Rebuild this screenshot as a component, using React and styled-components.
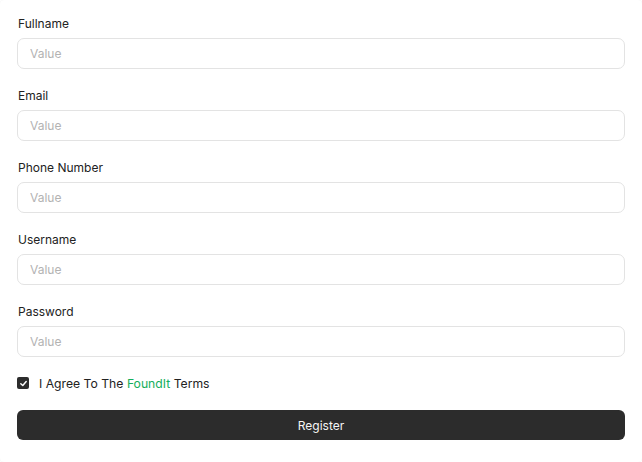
import React from "react";
import styled, { createGlobalStyle } from "styled-components";

const Global = createGlobalStyle`
  html, body { margin: 0; padding: 0; background: #ffffff; }
  body { font-family: Inter, "Noto Sans", sans-serif; }
  * { box-sizing: border-box; }
`;

const Card = styled.form`
  width: 642px;
  min-height: 462px;
  padding: 15px 17px 0 17px;
  display: flex;
  flex-direction: column;
  background: #fff;
  border-radius: 4px;
  box-shadow: 0 0 1px rgba(0,0,0,0.08);
`;

const Field = styled.div`
  display: flex;
  flex-direction: column;
  margin-bottom: 18px;
`;

const Label = styled.label`
  font-size: 12px;
  line-height: 16px;
  color: #222;
  padding: 1px 0 0 1px;
  margin-bottom: 6px;
`;

const Input = styled.input`
  height: 31px;
  width: 608px;
  border: 1px solid #e3e3e3;
  border-radius: 7px;
  padding: 0 12px;
  font-family: Inter, "Noto Sans", sans-serif;
  font-size: 12px;
  color: #1e1e1e;
  outline: none;
  &::placeholder { color: #b3b3b3; }
`;

const CheckRow = styled.label`
  display: flex;
  align-items: center;
  gap: 10px;
  height: 16px;
  font-size: 12.2px;
  color: #222;
  margin-bottom: 19px;
`;

const Box = styled.span`
  width: 12px;
  height: 12px;
  border-radius: 2px;
  background: #2c2c2c;
  display: flex;
  align-items: center;
  justify-content: center;
`;

const Brand = styled.span`
  color: #14ae5c;
`;

const Button = styled.button`
  width: 608px;
  height: 30px;
  border: none;
  border-radius: 6px;
  background: #2c2c2c;
  color: #f5f5f5;
  font-family: Inter, "Noto Sans", sans-serif;
  font-size: 12px;
`;

const fields = ["Fullname", "Email", "Phone Number", "Username", "Password"];

export default function App() {
  return (
    <>
      <Global />
      <Card onSubmit={(e) => e.preventDefault()}>
        {fields.map((f) => (
          <Field key={f}>
            <Label>{f}</Label>
            <Input placeholder="Value" type={f === "Password" ? "password" : "text"} />
          </Field>
        ))}
        <CheckRow>
          <Box>
            <svg width="9" height="9" viewBox="0 0 10 10">
              <path d="M2 5.2 L4.2 7.3 L8 2.8" fill="none" stroke="#fff" strokeWidth="1.6" strokeLinecap="round" strokeLinejoin="round" />
            </svg>
          </Box>
          <span>
            I Agree To The <Brand>FoundIt</Brand> Terms
          </span>
        </CheckRow>
        <Button type="submit">Register</Button>
      </Card>
    </>
  );
}
